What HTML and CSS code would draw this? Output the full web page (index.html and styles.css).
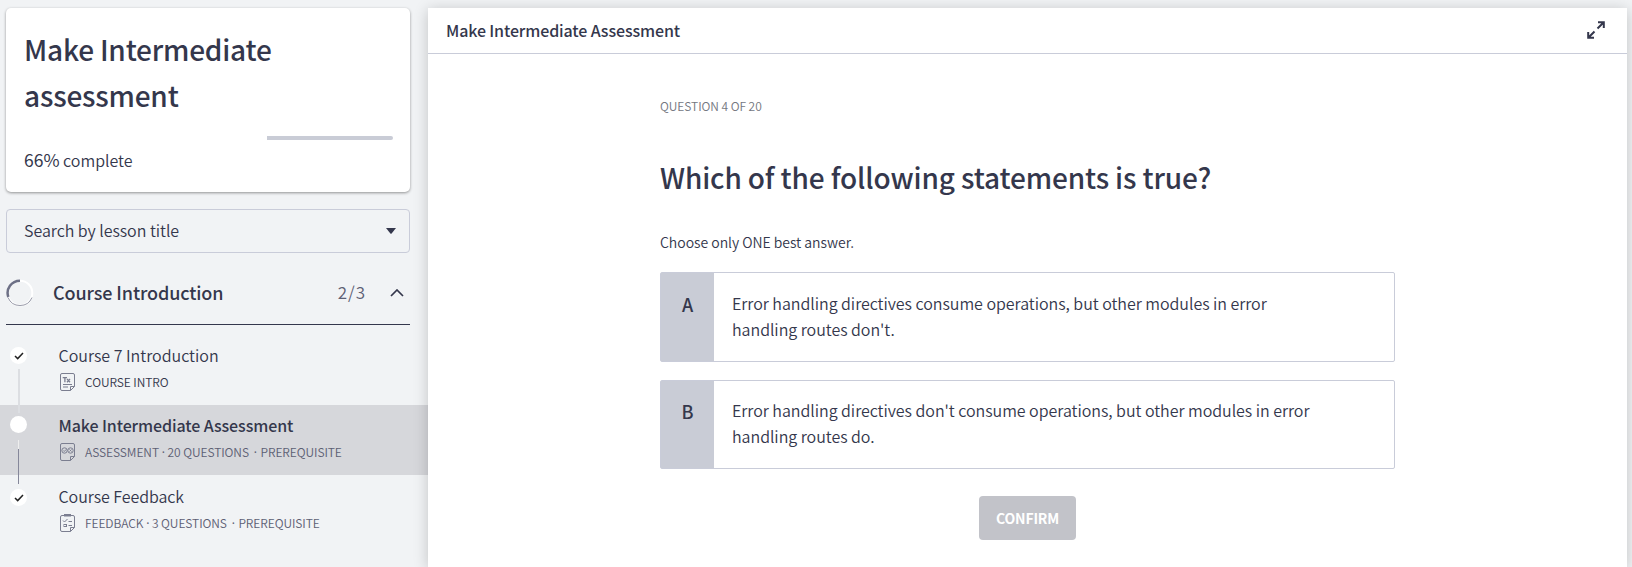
FILE: index.html
```
<!DOCTYPE html>
<html lang="en">
<head>
<meta charset="utf-8">
<title>Make Intermediate Assessment</title>
<link rel="stylesheet" href="styles.css">
</head>
<body>
<div class="app">
  <aside class="sidebar">
    <section class="card">
      <h1 class="card-title">Make Intermediate assessment</h1>
      <div class="progress"><div class="progress-rest"></div></div>
      <p class="complete"><b>66%</b> complete</p>
    </section>
    <div class="search">
      <span class="search-text">Search by lesson title</span>
      <svg class="caret" viewBox="0 0 10 6"><path d="M0 0h10L5.6 5.5q-.6.6-1.2 0z"/></svg>
    </div>
    <div class="section-head">
      <svg class="ring" viewBox="0 0 28 28">
        <circle cx="14" cy="14" r="12.3" class="ring-base"/>
        <path d="M2 18.500A13 13 0 0 0 26 18.500" class="ring-edge"/>
        <path d="M14 1.700A12.300 12.300 0 0 0 2.300 18" class="ring-arc"/>
      </svg>
      <h2 class="section-title">Course Introduction</h2>
      <span class="count">2/3</span>
      <svg class="chevron" viewBox="0 0 14 8"><path d="M1 7l6-6 6 6"/></svg>
    </div>
    <ul class="lessons">
      <li class="lesson first">
        <div class="rail"><span class="dot"><svg viewBox="0 0 10 8"><path d="M1 4l2.7 2.6L9 1"/></svg></span><span class="line pale"></span></div>
        <div class="info">
          <div class="name">Course 7 Introduction</div>
          <div class="meta">
            <svg class="doc" viewBox="0 0 15 18"><path d="M.5 2Q.5.5 2 .5h11Q14.500.5 14.500 2v11.500l-4 4H2Q.5 17.500.5 16zM10.500 17.500v-4h4M3 11.500h9M3 14h5"/><path class="tx" d="M2.700 4.600h4.300M4.900 4.600v4.600M7 6l3 3.200M10 6l-3 3.200"/></svg>
            <span class="meta-text m1">COURSE INTRO</span>
          </div>
        </div>
      </li>
      <li class="lesson active">
        <div class="rail"><span class="dot"></span><span class="line split"></span></div>
        <div class="info">
          <div class="name">Make Intermediate Assessment</div>
          <div class="meta">
            <svg class="doc" viewBox="0 0 15 18"><path d="M.5 2Q.5.5 2 .5h11Q14.500.5 14.500 2v11.500l-4 4H2Q.5 17.500.5 16zM10.500 17.500v-4h4"/><circle cx="4.500" cy="7.500" r="2.700"/><circle cx="10.500" cy="7.500" r="2.700"/><path d="M3.300 7.500l1 1 1.700-2M9.500 6.500l2 2M11.500 6.500l-2 2"/></svg>
            <span class="meta-text m2">ASSESSMENT<i> · </i>20 QUESTIONS<i class="wide"> · </i>PREREQUISITE</span>
          </div>
        </div>
      </li>
      <li class="lesson last">
        <div class="rail"><span class="dot"><svg viewBox="0 0 10 8"><path d="M1 4l2.700 2.600L9 1"/></svg></span></div>
        <div class="info">
          <div class="name">Course Feedback</div>
          <div class="meta">
            <svg class="doc" viewBox="0 0 15 18"><path d="M.5 3Q.5 1.500 2 1.500h11Q14.500 1.500 14.500 3v10.500l-4 4H2Q.5 17.500.5 16zM10.500 17.500v-4h4M3 6.500l1.500 1.500 3-3M8.500 7.500h3.500M8.500 11.500h3.500"/><rect x="4" y="10.500" width="2.500" height="2"/><path class="clip" d="M4 0h7v2.500H4z"/></svg>
            <span class="meta-text m3">FEEDBACK<i> · </i>3 QUESTIONS<i class="wide"> · </i>PREREQUISITE</span>
          </div>
        </div>
      </li>
    </ul>
  </aside>
  <main class="main">
    <header class="bar">
      <span class="bar-title">Make Intermediate Assessment</span>
      <svg class="expand" viewBox="0 0 18 18"><path d="M10.500 7.500l6-6M11 1.200h5.800V7M7.500 10.500l-6 6M1.200 11v5.800H7"/></svg>
    </header>
    <div class="content">
      <div class="counter">QUESTION 4 OF 20</div>
      <h2 class="question">Which of the following statements is true?</h2>
      <p class="hint">Choose only ONE best answer.</p>
      <div class="option"><div class="letter">A</div><div class="answer">Error handling directives consume operations, but other modules in error<br>handling routes don't.</div></div>
      <div class="option second"><div class="letter">B</div><div class="answer">Error handling directives don't consume operations, but other modules in error<br>handling routes do.</div></div>
      <button class="confirm">CONFIRM</button>
    </div>
  </main>
</div>
</body>
</html>
```
FILE: styles.css
```
* { box-sizing: border-box; }
body {
  margin: 0;
  background: #f1f3f5;
  color: #34374c;
  font-family: "Noto Sans CJK SC", "Noto Sans", sans-serif;
  font-size: 16px;
  font-weight: 350;
  overflow: hidden;
}
h1, h2, p, ul { margin: 0; padding: 0; }
h1, h2 { font-weight: 500; }
svg { display: block; fill: none; stroke: currentColor; flex: none; }
.app { display: flex; height: 567px; padding-top: 8px; }
.sidebar { width: 428px; flex: none; }
.card {
  width: 404px; height: 184px; margin-left: 6px; padding: 18px 17px 0 18px;
  background: #fff; border-radius: 5px;
  box-shadow: 0 1px 3px rgba(0, 0, 0, .4);
}
.card-title { font-size: 28px; line-height: 46px; width: 300px; letter-spacing: -.2px; }
.progress { height: 4px; margin-top: 18px; display: flex; justify-content: flex-end; }
.progress-rest { width: 126px; background: #c9ccd6; border-radius: 0 2px 2px 0; }
.complete { font-size: 16px; line-height: 24px; margin-top: 8px; }
.complete b { font-weight: 400; font-size: 17.500px; }
.search {
  display: flex; align-items: center; justify-content: space-between;
  width: 404px; height: 44px; margin: 17px 0 0 6px; padding: 0 13px 0 17px;
  border: 1px solid #c9ccd9; border-radius: 4px;
}
.search-text { font-size: 16px; line-height: 24px; padding-bottom: 3px; letter-spacing: -.04px; }
.caret { width: 10px; height: 6px; fill: #34374c; stroke: none; }
.section-head {
  display: flex; align-items: center;
  width: 404px; height: 72px; margin-left: 6px; padding: 8px 6px 0 0;
  border-bottom: 1px solid #34374c;
}
.ring { width: 28px; height: 28px; }
.ring-base { stroke: #fff; stroke-width: 2; }
.ring-edge { stroke: #7d8093; stroke-width: .8; }
.ring-arc { stroke: #6d7086; stroke-width: 2.500; }
.section-title { font-size: 18px; line-height: 26px; margin-left: 19px; flex: 1; letter-spacing: -.1px; padding-bottom: 1px; }
.count { font-size: 17px; line-height: 24px; letter-spacing: 1px; color: #5d6074; margin-right: 24px; padding-bottom: 1px; }
.chevron { width: 14px; height: 8px; stroke-width: 1.700; }
.lessons { list-style: none; padding-top: 10px; }
.lesson { display: flex; height: 70px; }
.lesson.active { background: #d6d7db; }
.rail { width: 37px; display: flex; flex-direction: column; align-items: center; padding-top: 12px; }
.dot { width: 17px; height: 17px; flex: none; border-radius: 50%; background: #fff; display: grid; place-items: center; color: #222; }
.dot svg { width: 10px; height: 8px; stroke-width: 1.500; }
.line { width: 2px; height: 44px; margin-top: 5px; flex: none; position: relative; }
.pale { background: #dcdee2; }
.split { width: 1px; height: 44px; margin-top: 7px; background: linear-gradient(#eee 9px, #85879a 9px); }
.active .rail { padding-top: 11px; }
.last .rail { padding-top: 14px; }
.info { padding: 8px 0 0 21px; }
.last .info { padding-top: 9px; }
.name { font-size: 16px; line-height: 24px; padding-left: .5px; }
.active .name { font-weight: 500; letter-spacing: -.1px; }
.last .name { letter-spacing: -.06px; }
.meta { display: flex; align-items: center; height: 18px; margin-top: 6px; color: #5d6074; }
.doc { width: 15px; height: 18px; margin-left: 2px; stroke-width: 1; color: #7b7e90; }
.tx { stroke-width: 1.300; }
.clip { fill: currentColor; stroke: none; }
.meta-text { font-size: 12px; line-height: 18px; margin-left: 10px; white-space: pre; letter-spacing: -.07px; }
.meta-text i { font-family: "Noto Sans", sans-serif; font-style: normal; font-weight: 400; letter-spacing: -.3px; }
.meta-text .wide { padding: 0 1px 0 2px; }
.m1 { color: #34374c; padding-bottom: 1px; }
.main {
  width: 1199px; height: 559px; background: #fff; position: relative;
  box-shadow: 0 2px 14px rgba(0, 0, 0, .2);
}
.bar { display: flex; align-items: center; justify-content: space-between; height: 46px; padding: 0 22px 2px 18px; border-bottom: 1px solid #c9ccd9; }
.bar-title { font-size: 16px; line-height: 24px; font-weight: 500; letter-spacing: -.13px; }
.expand { width: 18px; height: 18px; stroke-width: 2; }
.content { width: 735px; margin-left: 232px; padding-top: 42px; display: flex; flex-direction: column; }
.counter { font-size: 12px; line-height: 20px; color: #74777f; letter-spacing: -.05px; }
.question { font-size: 28px; line-height: 46px; margin-top: 38px; white-space: nowrap; letter-spacing: -.13px; }
.hint { font-size: 14px; line-height: 22px; margin-top: 31px; margin-bottom: 19px; letter-spacing: -.03px; }
.option { display: flex; height: 90px; margin-bottom: 18px; border: 1px solid #c9ccd9; border-radius: 2px; }
.letter { width: 53px; background: #c9ccd6; text-align: center; font-size: 18px; font-weight: 500; line-height: 26px; padding-top: 18px; }
.answer { font-size: 16px; line-height: 26px; padding: 17px 0 0 18px; white-space: nowrap; letter-spacing: -.035px; }
.second { height: 89px; }
.second .letter { padding-top: 17px; }
.second .answer { padding-top: 16px; }
.confirm {
  align-self: center; width: 97px; height: 44px; margin-top: 9px; padding: 0 0 1px;
  border: 0; border-radius: 4px; background: #c2c3c9; color: #fff;
  font: 700 14px/20px "Noto Sans CJK SC", "Noto Sans", sans-serif; letter-spacing: -.2px;
}
```
